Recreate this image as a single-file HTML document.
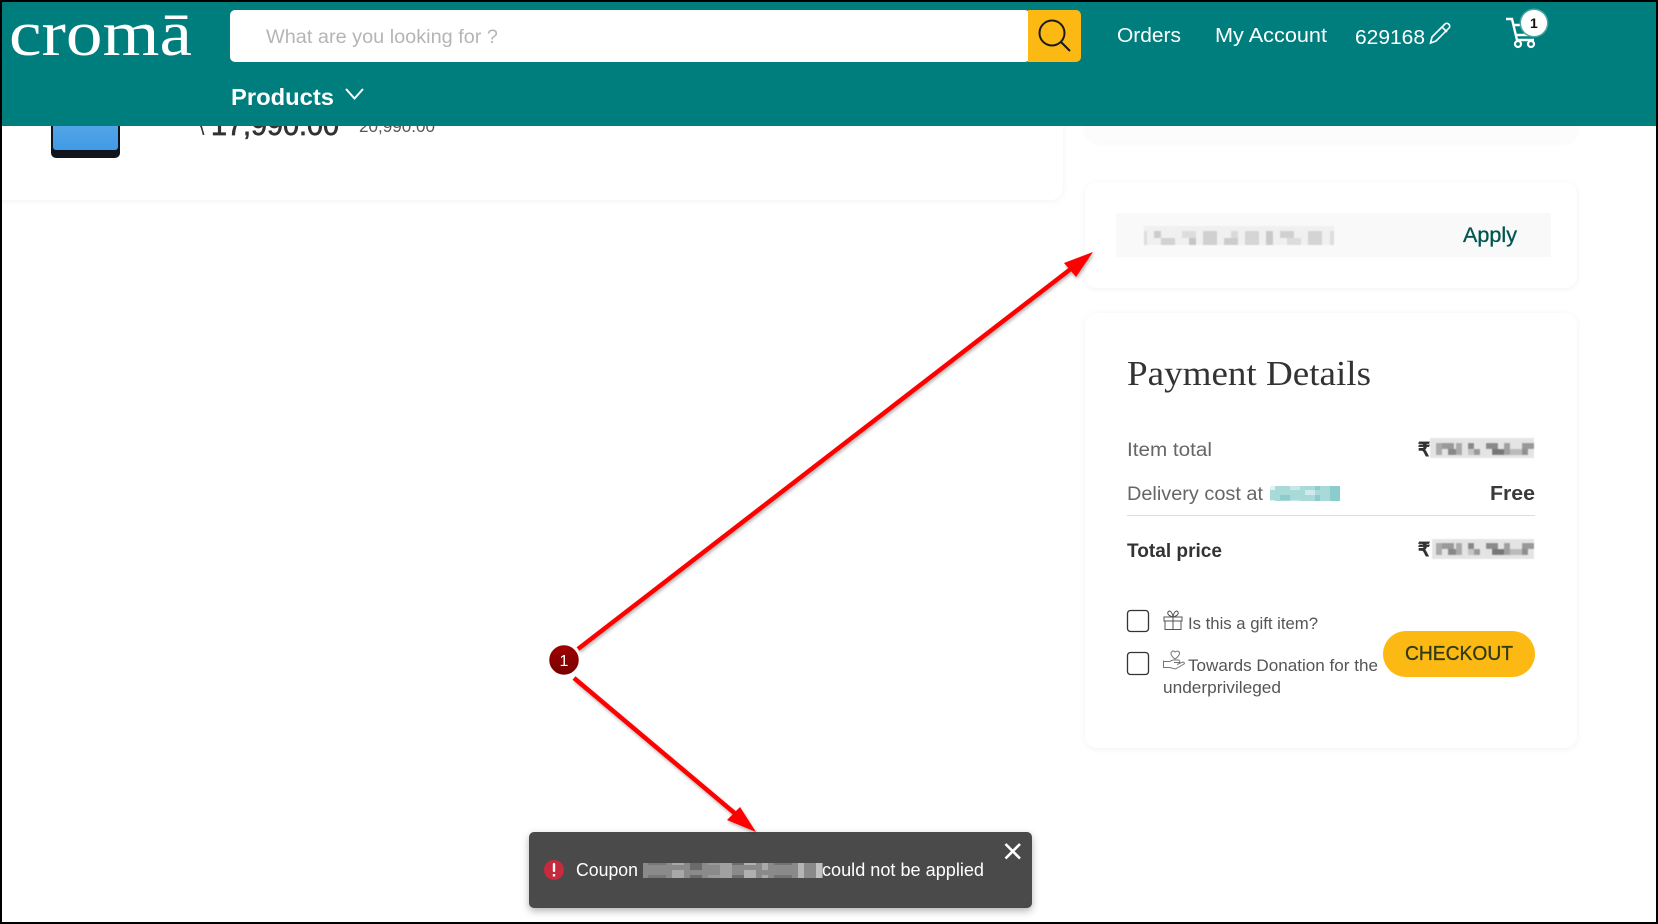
<!DOCTYPE html>
<html lang="en"><head><meta charset="utf-8"><title>Croma</title>
<style>
html,body{margin:0;padding:0;width:1658px;height:924px;overflow:hidden;background:#000}
#p{position:absolute;left:2px;top:2px;width:1654px;height:920px;background:#fff;overflow:hidden}
.a{position:absolute}
.card{background:#fff;border-radius:12px;box-shadow:0 1px 7px rgba(0,0,0,.055)}
svg{position:absolute;left:0;top:0}
text{font-family:"Liberation Sans",sans-serif}
</style></head><body>
<div id="p">
<div class="a card" style="left:-10px;top:60px;width:1071px;height:138px"></div>
<div class="a card" style="left:1083px;top:40px;width:492px;height:101px;border-radius:14px;box-shadow:0 1px 5px rgba(0,0,0,.03);background:#fcfcfc"></div>
<div class="a card" style="left:1083px;top:180px;width:492px;height:106px"></div>
<div class="a card" style="left:1083px;top:311px;width:492px;height:435px"></div>
<div class="a" style="left:1114px;top:211px;width:435px;height:44px;background:#f9f9f9"></div>
<div class="a" style="left:527px;top:830px;width:503px;height:76px;background:#4a4a4a;border-radius:5px;box-shadow:0 3px 8px rgba(0,0,0,.3)"></div>
</div>
<svg width="1658" height="924" viewBox="0 0 1658 924" xmlns="http://www.w3.org/2000/svg">
<defs>
<pattern id="g" width="104" height="20" patternUnits="userSpaceOnUse"><rect width="104" height="20" fill="#e4e4e4"/><rect x="0" y="3" width="6" height="12" fill="#aaa"/><rect x="12" y="3" width="6" height="6" fill="#888"/><rect x="12" y="9" width="6" height="6" fill="#c5c5c5"/><rect x="18" y="9" width="6" height="6" fill="#999"/><rect x="30" y="3" width="12" height="6" fill="#8a8a8a"/><rect x="36" y="9" width="12" height="6" fill="#777"/><rect x="48" y="3" width="6" height="12" fill="#a0a0a0"/><rect x="54" y="9" width="12" height="6" fill="#bbb"/><rect x="66" y="3" width="12" height="6" fill="#999"/><rect x="66" y="9" width="6" height="6" fill="#8f8f8f"/><rect x="84" y="3" width="6" height="12" fill="#aaa"/><rect x="90" y="3" width="12" height="6" fill="#999"/><rect x="96" y="9" width="8" height="6" fill="#888"/></pattern>
<pattern id="l" width="190" height="19" patternUnits="userSpaceOnUse"><rect width="190" height="19" fill="#f0f0f0"/><rect x="0" y="3" width="7" height="14" fill="#ddd"/><rect x="14" y="3" width="7" height="7" fill="#ccc"/><rect x="21" y="10" width="14" height="7" fill="#d2d2d2"/><rect x="42" y="3" width="14" height="7" fill="#ddd"/><rect x="49" y="10" width="7" height="7" fill="#c5c5c5"/><rect x="63" y="3" width="14" height="14" fill="#d0d0d0"/><rect x="84" y="10" width="14" height="7" fill="#ccc"/><rect x="91" y="3" width="7" height="7" fill="#dadada"/><rect x="105" y="3" width="14" height="14" fill="#d5d5d5"/><rect x="126" y="3" width="7" height="14" fill="#c9c9c9"/><rect x="140" y="3" width="14" height="7" fill="#d0d0d0"/><rect x="147" y="10" width="14" height="7" fill="#dcdcdc"/><rect x="168" y="3" width="14" height="14" fill="#d4d4d4"/></pattern>
<pattern id="t" width="70" height="15" patternUnits="userSpaceOnUse"><rect width="70" height="15" fill="#a8dada"/><rect x="0" width="10" height="15" fill="#8bcccc"/><rect x="10" y="5" width="5" height="5" fill="#e0f2f2"/><rect x="20" width="10" height="5" fill="#8ccccc"/><rect x="30" y="5" width="10" height="5" fill="#c8e8e8"/><rect x="45" y="10" width="10" height="5" fill="#cfeaea"/><rect x="55" width="5" height="10" fill="#8ccccc"/></pattern>
<pattern id="d" width="180" height="15" patternUnits="userSpaceOnUse"><rect width="180" height="15" fill="#8a8a8a"/><rect x="0" width="12" height="15" fill="#a0a0a0"/><rect x="12" y="5" width="12" height="5" fill="#6e6e6e"/><rect x="24" width="12" height="10" fill="#b0b0b0"/><rect x="42" y="5" width="6" height="10" fill="#aaa"/><rect x="54" y="5" width="18" height="5" fill="#737373"/><rect x="78" width="6" height="15" fill="#b5b5b5"/><rect x="96" width="6" height="15" fill="#c0c0c0"/><rect x="108" y="5" width="18" height="5" fill="#777"/><rect x="132" width="12" height="10" fill="#a8a8a8"/><rect x="150" y="5" width="12" height="10" fill="#6a6a6a"/><rect x="168" y="5" width="12" height="5" fill="#999"/></pattern>
<linearGradient id="m" x1="0" y1="0" x2="0" y2="1"><stop offset="0" stop-color="#a00000"/><stop offset="1" stop-color="#760000"/></linearGradient>
<linearGradient id="ph" x1="0" y1="0" x2="0" y2="1"><stop offset="0" stop-color="#6aaee6"/><stop offset="1" stop-color="#3f9be6"/></linearGradient>
<filter id="s" x="-10%" y="-10%" width="120%" height="120%"><feDropShadow dx="1" dy="2" stdDeviation="1.5" flood-color="#000" flood-opacity=".3"/></filter>
<filter id="b"><feGaussianBlur stdDeviation=".6"/></filter>
<filter id="b2"><feGaussianBlur stdDeviation=".5"/></filter>
</defs>

<!-- product peek -->
<rect x="51" y="100" width="69" height="58" rx="5" fill="#11141c"/>
<rect x="53" y="100" width="65" height="50" rx="3" fill="url(#ph)"/>
<text x="196" y="135" font-size="30" fill="#333" textLength="10" lengthAdjust="spacingAndGlyphs">₹</text>
<text x="211" y="135" font-size="30" fill="#333" stroke="#333" stroke-width=".7" textLength="128" lengthAdjust="spacingAndGlyphs">17,990.00</text>
<text x="359" y="132" font-size="17" fill="#555" textLength="76" lengthAdjust="spacingAndGlyphs">20,990.00</text>

<!-- header -->
<rect x="2" y="2" width="1654" height="124" fill="#007e7e"/>
<text x="9" y="55" font-size="65" fill="#fff" style="font-family:'Liberation Serif',serif" textLength="183" lengthAdjust="spacingAndGlyphs">cromā</text>
<rect x="230" y="10" width="800" height="52" rx="5" fill="#fff"/>
<path d="M1028 10h48a5 5 0 0 1 5 5v42a5 5 0 0 1-5 5h-48z" fill="#fdb913"/>
<circle cx="1052" cy="33" r="12.500" fill="none" stroke="#1a1a1a" stroke-width="2"/>
<path d="M1061 42l9 9" stroke="#1a1a1a" stroke-width="2" fill="none"/>
<text x="266" y="43" font-size="19" fill="#b5b5b5" textLength="232" lengthAdjust="spacingAndGlyphs">What are you looking for ?</text>
<text x="231" y="105" font-size="23.500" font-weight="700" fill="#fff" textLength="103" lengthAdjust="spacingAndGlyphs">Products</text>
<path d="M346 89l8.500 9.500l8.500-9.500" stroke="#fff" stroke-width="2" fill="none"/>
<text x="1117" y="42" font-size="20" fill="#fff" textLength="64" lengthAdjust="spacingAndGlyphs">Orders</text>
<text x="1215" y="42" font-size="20" fill="#fff" textLength="112" lengthAdjust="spacingAndGlyphs">My Account</text>
<text x="1355" y="44" font-size="20" fill="#fff" textLength="70" lengthAdjust="spacingAndGlyphs">629168</text>
<path d="M1432 37l13-13a2.500 2.500 0 0 1 3.500 0l.5.500a2.500 2.500 0 0 1 0 3.500l-13 13l-5.500 2zM1442 27l5 5" stroke="#fff" stroke-width="1.600" fill="none"/>
<path d="M1506 19h6l5 21h17M1514 25h18l-2 10h-15" stroke="#fff" stroke-width="2.400" fill="none"/>
<circle cx="1518" cy="44" r="3" fill="none" stroke="#fff" stroke-width="2.200"/>
<circle cx="1531" cy="44" r="3" fill="none" stroke="#fff" stroke-width="2.200"/>
<circle cx="1534" cy="23" r="14.500" fill="#4aa5a5"/>
<circle cx="1534" cy="23" r="13" fill="#fff"/>
<text x="1530" y="28" font-size="14" font-weight="700" fill="#111">1</text>

<!-- coupon -->
<rect x="1144" y="226" width="190" height="19" fill="url(#l)" filter="url(#b)"/>
<text x="1463" y="242" font-size="21" fill="#00564f" stroke="#00564f" stroke-width=".3" textLength="54" lengthAdjust="spacingAndGlyphs">Apply</text>

<!-- payment -->
<text x="1127" y="385" font-size="35" fill="#333" style="font-family:'Liberation Serif',serif" textLength="244" lengthAdjust="spacingAndGlyphs">Payment Details</text>
<text x="1127" y="456" font-size="19" fill="#666" textLength="85" lengthAdjust="spacingAndGlyphs">Item total</text>
<text x="1418" y="456" font-size="19" font-weight="700" fill="#333" stroke="#333" stroke-width=".4">₹</text>
<rect x="1430" y="438" width="104" height="20" fill="url(#g)" filter="url(#b2)"/>
<text x="1127" y="500" font-size="19" fill="#666" textLength="136" lengthAdjust="spacingAndGlyphs">Delivery cost at</text>
<rect x="1270" y="486" width="70" height="15" fill="url(#t)"/>
<text x="1490" y="500" font-size="20.500" font-weight="700" fill="#3a3a3a" textLength="45" lengthAdjust="spacingAndGlyphs">Free</text>
<rect x="1127" y="515" width="408" height="1" fill="#ddd"/>
<text x="1127" y="557" font-size="19.500" font-weight="700" fill="#333" textLength="95" lengthAdjust="spacingAndGlyphs">Total price</text>
<text x="1418" y="556" font-size="19" font-weight="700" fill="#333" stroke="#333" stroke-width=".4">₹</text>
<rect x="1432" y="539" width="102" height="20" fill="url(#g)" filter="url(#b2)"/>

<rect x="1127.500" y="610.500" width="21" height="21" rx="3" fill="#fff" stroke="#333" stroke-width="1.300"/>
<rect x="1127.500" y="652.500" width="21" height="22" rx="3" fill="#fff" stroke="#333" stroke-width="1.300"/>
<path d="M1164 617h18v4h-18zM1165 621h16v8.500h-16zM1173 617v12.500M1173 617c-4-1-6-3-5-5s4-1 5 5c1-6 4-7 5-5s-1 4-5 5" stroke="#555" stroke-width="1" fill="none"/>
<path d="M1163.500 661.500h6l3.500-1.500h6l1 2.500h-6M1163.500 667.500h6l6 1.500l8.500-5c1-1 0-2-1.500-1.800l-5.500 2.300M1163.500 660.500v7.500M1175 659c-4-3-5-6-3-7.500s3 .500 3 1c0-.500 1.500-2 3.500-1s1 4.500-3.500 7.500z" stroke="#777" stroke-width="1" fill="none"/>
<text x="1188" y="629" font-size="17" fill="#555" textLength="130" lengthAdjust="spacingAndGlyphs">Is this a gift item?</text>
<text x="1188" y="671" font-size="17" fill="#555" textLength="190" lengthAdjust="spacingAndGlyphs">Towards Donation for the</text>
<text x="1163" y="693" font-size="17" fill="#555" textLength="118" lengthAdjust="spacingAndGlyphs">underprivileged</text>
<rect x="1383" y="631" width="152" height="46" rx="23" fill="#fdb913"/>
<text x="1405" y="660" font-size="20.500" fill="#2f3a18" stroke="#2f3a18" stroke-width=".3" textLength="108" lengthAdjust="spacingAndGlyphs">CHECKOUT</text>

<!-- toast -->
<circle cx="554" cy="870" r="10" fill="#c62a3c"/>
<rect x="552.800" y="863" width="2.400" height="9" rx="1" fill="#fff"/>
<rect x="552.800" y="874" width="2.400" height="2.500" fill="#fff"/>
<text x="576" y="876" font-size="18" fill="#fff" textLength="62" lengthAdjust="spacingAndGlyphs">Coupon</text>
<rect x="643" y="863" width="180" height="15" fill="url(#d)"/>
<text x="822" y="876" font-size="18" fill="#fff" textLength="162" lengthAdjust="spacingAndGlyphs">could not be applied</text>
<path d="M1005.500 844l14.500 14.500M1020 844l-14.500 14.500" stroke="#fff" stroke-width="2.600"/>

<!-- annotations -->
<g filter="url(#s)">
<path d="M578 649L1072 268" stroke="#f00" stroke-width="4.500"/>
<path d="M1093 252L1064 263L1076 277z" fill="#f00"/>
<path d="M574 678L738 816" stroke="#f00" stroke-width="4.500"/>
<path d="M756 832L740 807L727 820z" fill="#f00"/>
</g>
<circle cx="564" cy="660" r="15.500" fill="url(#m)" stroke="#fff" stroke-width="1.500"/>
<text x="559.500" y="666" font-size="16" fill="#fff">1</text>
</svg>
</body></html>
